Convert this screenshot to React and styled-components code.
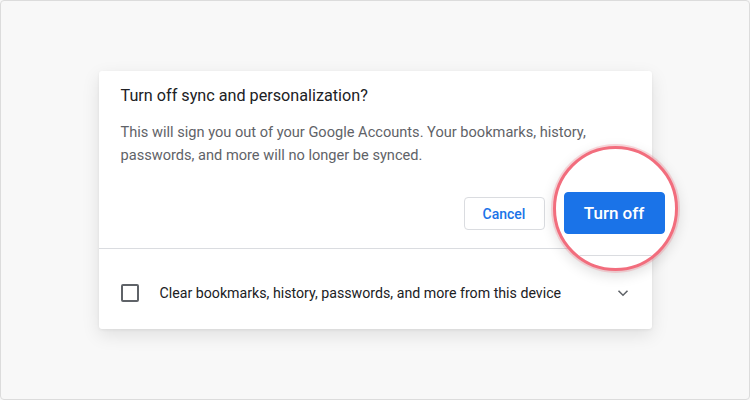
import React from 'react'
import styled, { createGlobalStyle } from 'styled-components'

const GlobalStyle = createGlobalStyle`
    html, body {
        margin: 0;
        padding: 0;
        background: #f8f8f8;
        font-family: Roboto, "Liberation Sans", Arial, sans-serif;
    }
    * { box-sizing: border-box; }
`

const Frame = styled.div`
    width: 750px;
    height: 400px;
    border: 1px solid #dcdcdc;
    border-radius: 4px;
    background: #f8f8f8;
    display: flex;
    align-items: center;
    justify-content: center;
`

const Dialog = styled.div`
    position: relative;
    width: 553px;
    background: #fff;
    border-radius: 3px;
    box-shadow: 0 6px 18px rgba(0, 0, 0, 0.1), 0 1px 3px rgba(0, 0, 0, 0.06);
`

const Top = styled.div`
    padding: 15px 13px 18px 22px;
`

const Title = styled.h1`
    margin: 0;
    font-size: 16.2px;
    line-height: 20px;
    font-weight: 400;
    color: #202124;
`

const Body = styled.p`
    margin: 15px 0 0;
    font-size: 14.6px;
    line-height: 23px;
    color: #5f6368;
`

const Actions = styled.div`
    display: flex;
    justify-content: flex-end;
    gap: 13px;
    margin-top: 30px;
`

const Button = styled.button`
    height: ${p => p.big ? 42 : 33}px;
    width: ${p => p.big ? 101 : 81}px;
    padding: 0;
    border-radius: 4px;
    font-family: inherit;
    font-size: ${p => p.big ? 17 : 14}px;
    font-weight: 500;
    cursor: pointer;
    border: 1px solid ${p => p.primary ? '#1a73e8' : '#dadce0'};
    background: ${p => p.primary ? '#1a73e8' : '#fff'};
    color: ${p => p.primary ? '#fff' : '#1a73e8'};
`

const Divider = styled.div`
    height: 1px;
    background: #dadce0;
`

const Bottom = styled.div`
    display: flex;
    align-items: center;
    padding: 35px 22px 27px;
`

const Checkbox = styled.span`
    width: 18px;
    height: 18px;
    border: 2px solid #5f6368;
    border-radius: 2px;
    flex: none;
`

const Label = styled.span`
    flex: 1;
    margin-left: 21px;
    font-size: 14.2px;
    line-height: 18px;
    color: #202124;
`

const Chevron = styled.svg`
    width: 12px;
    height: 8px;
    margin-right: 1px;
`

const Magnifier = styled.div`
    position: absolute;
    left: 454px;
    top: 75px;
    width: 125px;
    height: 125px;
    border-radius: 50%;
    border: 3px solid #f26d7d;
    background: #fff;
    overflow: hidden;
    box-shadow: 0 0 0 2px rgba(242, 109, 125, 0.25), 0 4px 14px rgba(0, 0, 0, 0.14);
`

const MagContent = styled.div`
    position: absolute;
    left: 8px;
    top: 43px;
`

const MagDivider = styled.div`
    position: absolute;
    left: 0;
    top: 106px;
    width: 105px;
    height: 1px;
    background: #dadce0;
`

export default function App() {
    return (
        <>
            <GlobalStyle />
            <Frame>
                <Dialog>
                    <Top>
                        <Title>Turn off sync and personalization?</Title>
                        <Body>
                            This will sign you out of your Google Accounts. Your bookmarks, history,
                            <br />
                            passwords, and more will no longer be synced.
                        </Body>
                        <Actions>
                            <Button>Cancel</Button>
                            <Button primary aria-hidden="true" tabIndex={-1}></Button>
                        </Actions>
                    </Top>
                    <Divider />
                    <Bottom>
                        <Checkbox />
                        <Label>Clear bookmarks, history, passwords, and more from this device</Label>
                        <Chevron viewBox="0 0 12 8" fill="none">
                            <path d="M1.5 1.8 L6 6.2 L10.5 1.8" stroke="#5f6368" strokeWidth="1.6" />
                        </Chevron>
                    </Bottom>
                    <Magnifier>
                        <MagDivider />
                        <MagContent>
                            <Button primary big>Turn off</Button>
                        </MagContent>
                    </Magnifier>
                </Dialog>
            </Frame>
        </>
    )
}
